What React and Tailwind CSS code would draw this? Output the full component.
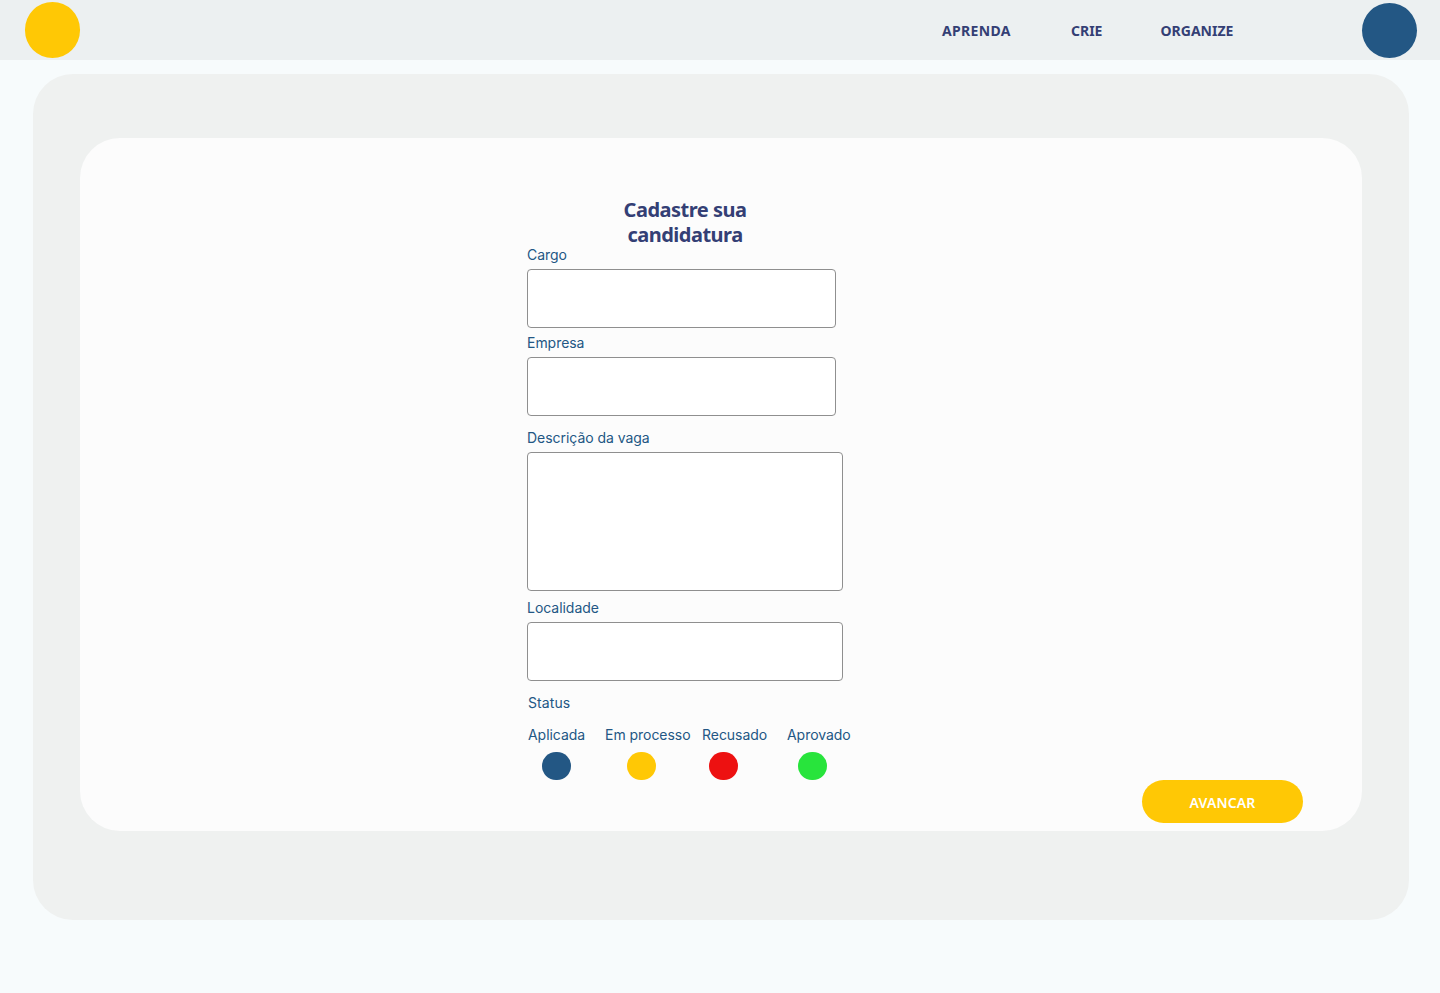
import React from "react";

const heading = "font-['Noto_Sans',sans-serif] font-bold text-[#343f75]";

function Field({ label, id, className, boxClass, multiline }) {
  const box = `block resize-none rounded border border-[#8f8f8f] bg-white px-3 text-sm outline-none ${boxClass}`;
  return (
    <div className={className}>
      <label htmlFor={id} className="mb-1.5 block h-4 text-sm leading-4 tracking-[-0.04px] whitespace-nowrap">
        {label}
      </label>
      {multiline ? <textarea id={id} className={box} /> : <input id={id} className={box} />}
    </div>
  );
}

function Status({ label, className, dotClass }) {
  return (
    <div className={`shrink-0 ${className}`}>
      <span className="block h-4 text-sm leading-4 tracking-[-0.04px] whitespace-nowrap">{label}</span>
      <span className={`mt-[9px] block h-7 w-[29px] rounded-full ${dotClass}`} />
    </div>
  );
}

export default function App() {
  return (
    <div className="h-[993px] w-full overflow-hidden bg-[#f7fbfc] font-['Inter',sans-serif] text-[#235784]">
      <header className="flex h-[60px] items-start bg-[#ecf0f1] pl-[25px]">
        <div className="mt-0.5 h-14 w-[55px] rounded-full bg-[#ffc805]" />
        <nav className={`ml-[862px] flex pt-[21px] text-sm leading-5 ${heading}`}>
          <a className="w-[129px] tracking-[0.35px]">APRENDA</a>
          <a className="w-[89px]">CRIE</a>
          <a className="w-[202px] pl-[0.5px]">ORGANIZE</a>
        </nav>
        <div className="mt-[3px] size-[55px] rounded-full bg-[#235784]" />
      </header>

      <main className="mt-3.5 ml-[33px] h-[846px] w-[1376px] rounded-[40px] bg-[#eff1f0] px-[47px] pt-16">
        <section className="flex h-[693px] w-[1282px] rounded-[40px] bg-[#fcfcfc] pt-[59px] pl-[447px]">
          <form className="w-[324px] shrink-0">
            <h1 className={`ml-[78px] h-[50px] w-40 text-center text-xl leading-[25px] tracking-[-0.5px] ${heading}`}>
              Cadastre sua
              <br />
              candidatura
            </h1>
            <Field id="cargo" label="Cargo" boxClass="h-[59px] w-[309px]" />
            <Field id="empresa" label="Empresa" className="mt-[7px]" boxClass="h-[59px] w-[309px]" />
            <Field id="descricao" label="Descrição da vaga" multiline className="mt-3.5" boxClass="h-[139px] w-[316px]" />
            <Field id="localidade" label="Localidade" className="mt-[9px]" boxClass="h-[59px] w-[316px]" />
            <p className="mt-3.5 h-4 pl-px text-sm leading-4 tracking-[0.1px]">Status</p>
            <div className="mt-4 flex pl-px">
              <Status label="Aplicada" className="w-[77px]" dotClass="ml-3.5 bg-[#235784]" />
              <Status label="Em processo" className="w-[97px]" dotClass="ml-[22px] bg-[#ffc805]" />
              <Status label="Recusado" className="w-[85px]" dotClass="ml-[7.4px] bg-[#ed1111]" />
              <Status label="Aprovado" className="w-16" dotClass="ml-[11.4px] bg-[#28e43c]" />
            </div>
          </form>
          <button
            type="button"
            className="mb-2 ml-[291px] h-[43px] w-[161px] self-end rounded-full bg-[#ffc805] pt-0.5 font-['Noto_Sans',sans-serif] text-sm font-semibold tracking-[0.15px] text-white"
          >
            AVANCAR
          </button>
        </section>
      </main>
    </div>
  );
}
